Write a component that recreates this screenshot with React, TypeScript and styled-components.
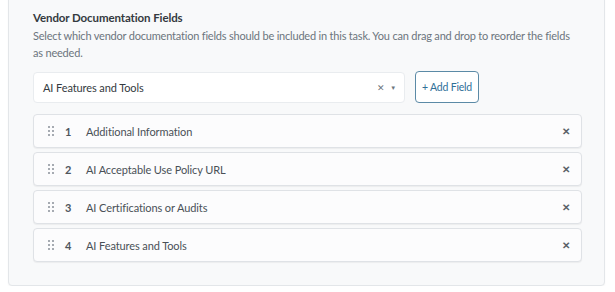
import React from "react";
import styled, { createGlobalStyle } from "styled-components";

const Global = createGlobalStyle`
  html, body { margin: 0; padding: 0; background: #ffffff; }
  body { font-family: Lato, "Noto Sans", sans-serif; color: #212529; }
`;

const Page = styled.div`
  padding: 0 10px 0 8px;
`;

const Card = styled.section`
  margin-top: -10px;
  background: #f8f9fa;
  border: 1px solid #e3e6e9;
  border-radius: 4px;
  padding: 20px 24px 23px 24px;
  box-shadow: 0 1px 2px rgba(0,0,0,0.04);
`;

const Title = styled.h3`
  margin: 0 0 2px;
  font-size: 11.5px;
  font-weight: 700;
  color: #343a40;
  line-height: 14px;
  letter-spacing: -0.1px;
`;

const Desc = styled.p`
  margin: 0 0 10px;
  font-size: 11px;
  line-height: 17px;
  color: #6c757d;
  letter-spacing: -0.2px;
`;

const Controls = styled.div`
  display: flex;
  align-items: center;
  gap: 10px;
  margin-bottom: 11px;
`;

const Select = styled.div`
  width: 372px;
  height: 31px;
  box-sizing: border-box;
  background: #fff;
  border: 1px solid #e9ecef;
  border-radius: 4px;
  display: flex;
  align-items: center;
  padding: 0 8px 0 9px;
  font-size: 11px;
  color: #343a40;
  letter-spacing: -0.1px;
`;

const SelectValue = styled.span`
  flex: 1;
`;

const SelectIcons = styled.span`
  display: flex;
  align-items: center;
  gap: 5px;
  color: #6c757d;
  font-size: 9px;
`;

const AddButton = styled.button`
  height: 32px;
  padding: 0 6px;
  background: #fff;
  border: 1px solid #5b8aa6;
  border-radius: 4px;
  color: #2f6f98;
  font-family: Lato, "Noto Sans", sans-serif;
  font-size: 10.5px;
  letter-spacing: -0.2px;
  cursor: pointer;
`;

const List = styled.div`
  display: flex;
  flex-direction: column;
  gap: 4px;
  width: 549px;
`;

const Row = styled.div`
  height: 34px;
  box-sizing: border-box;
  background: #fcfcfd;
  border: 1px solid #dfe2e6;
  border-radius: 4px;
  box-shadow: 0 1px 1px rgba(0,0,0,0.05);
  display: flex;
  align-items: center;
  padding: 0 11px 0 14px;
  font-size: 11px;
  color: #495057;
  letter-spacing: -0.1px;
`;

const Handle = styled.span`
  display: grid;
  grid-template-columns: 2px 2px;
  grid-template-rows: 2px 2px 2px;
  gap: 2px;
  margin-right: 11px;
  & > i {
    display: block;
    width: 2px;
    height: 2px;
    border-radius: 50%;
    background: #8a9199;
  }
`;

const Num = styled.span`
  width: 21px;
  font-weight: 700;
  color: #4f565d;
`;

const Label = styled.span`
  flex: 1;
`;

const Remove = styled.span`
  color: #5a6168;
  font-size: 10px;
  font-weight: 700;
`;

const fields = [
  "Additional Information",
  "AI Acceptable Use Policy URL",
  "AI Certifications or Audits",
  "AI Features and Tools",
];

export default function App() {
  return (
    <>
      <Global />
      <Page>
        <Card>
          <Title>Vendor Documentation Fields</Title>
          <Desc>
            Select which vendor documentation fields should be included in this task. You can drag and drop to reorder the fields as needed.
          </Desc>
          <Controls>
            <Select>
              <SelectValue>AI Features and Tools</SelectValue>
              <SelectIcons>
                <span>✕</span>
                <span style={{ fontSize: 6 }}>▼</span>
              </SelectIcons>
            </Select>
            <AddButton>+ Add Field</AddButton>
          </Controls>
          <List>
            {fields.map((f, i) => (
              <Row key={f}>
                <Handle>
                  <i /><i /><i /><i /><i /><i />
                </Handle>
                <Num>{i + 1}</Num>
                <Label>{f}</Label>
                <Remove>✕</Remove>
              </Row>
            ))}
          </List>
        </Card>
      </Page>
    </>
  );
}
